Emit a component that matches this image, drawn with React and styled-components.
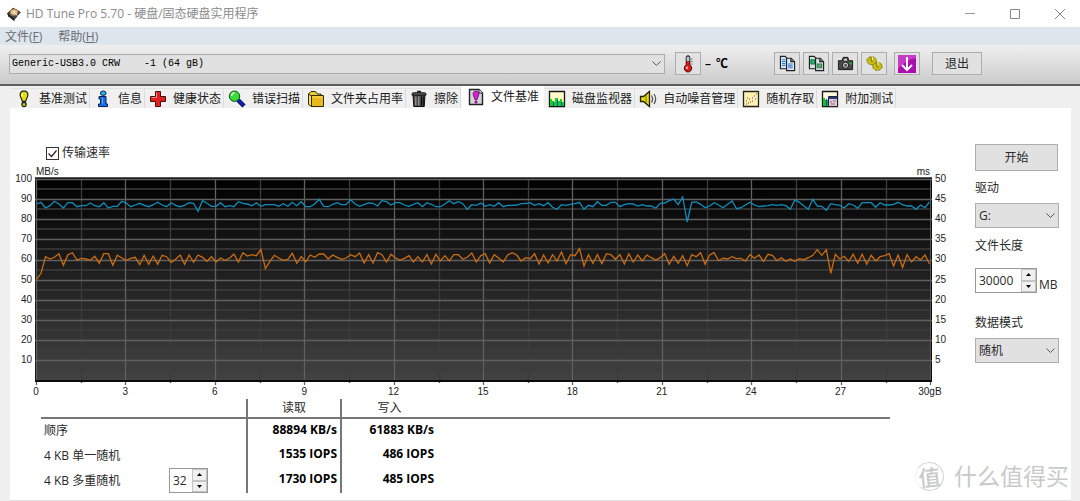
import React from 'react';
import styled, { createGlobalStyle, css } from 'styled-components';

const GlobalStyle = createGlobalStyle`
    * {
        box-sizing: border-box;
    }

    body {
        margin: 0;
        background: #f0f0f0;
        color: #2a2a2a;
        font: 12px/18px "Open Sans", "Noto Sans CJK SC", sans-serif;
    }

    button, input, select {
        font: inherit;
        color: inherit;
        margin: 0;
    }

    svg {
        display: block;
        flex: none;
    }
`;

const Window = styled.div`
    display: flex;
    flex-direction: column;
    min-height: 100vh;
    position: relative;
    overflow: hidden;
`;

const TitleBar = styled.header`
    display: flex;
    align-items: center;
    height: 27px;
    padding: 0 6px;
    background: #fff;
    color: #8c8c8c;
`;

const Title = styled.h1`
    flex: 1;
    margin: 0 0 0 4px;
    font-size: 12px;
    line-height: 18px;
    font-weight: 400;
`;

const WindowButtons = styled.div`
    display: flex;
    gap: 17px;
`;

const WindowButton = styled.button`
    display: flex;
    align-items: center;
    justify-content: center;
    width: 28px;
    height: 24px;
    padding: 0;
    border: 0;
    background: none;
`;

const MenuBar = styled.nav`
    display: flex;
    gap: 16px;
    height: 18px;
    padding: 0 5px;
    background: #dde5ed;
    line-height: 20px;
`;

const MenuItem = styled.a`
    color: #6a6e72;
    text-decoration: none;
`;

const Toolbar = styled.div`
    display: flex;
    align-items: center;
    height: 41px;
    padding: 0 98px 2px 9px;
    border-bottom: 2px solid #5e5e5e;
    background: linear-gradient(#efefef, #cbcbcb);
`;

const ToolGroup = styled.div`
    display: flex;
    gap: 3px;
    margin-right: ${props => props.$gap}px;
`;

const Button = styled.button`
    display: flex;
    align-items: center;
    justify-content: center;
    width: ${props => props.$width || 26}px;
    height: ${props => props.$height || 23}px;
    padding: 0;
    border: 1px solid #adadad;
    background: #e1e1e1;
`;

const Temperature = styled.span`
    display: flex;
    gap: 5px;
    width: 69px;
    margin-left: 4px;
    color: #000;
    font-weight: 600;
`;

const SelectBox = styled.div`
    position: relative;
    flex: ${props => props.$grow ? 1 : 'none'};
    margin-right: ${props => props.$grow ? 10 : 0}px;
`;

const Select = styled.select`
    display: block;
    width: 100%;
    height: ${props => props.$device ? 20 : 25}px;
    padding: 0 20px 0 3px;
    appearance: none;
    border: 1px solid #adadad;
    border-radius: 0;
    background: #e1e1e1;
    ${props => props.$device && css`
        padding-left: 2px;
        font: 10px "Liberation Mono", monospace;
        color: #000;
    `}
`;

const Arrow = styled.svg`
    position: absolute;
    right: 4px;
    top: 50%;
    margin-top: -3px;
    pointer-events: none;
`;

const TabList = styled.div`
    display: flex;
    align-items: flex-end;
    height: 22px;
    padding-left: 11px;
`;

const Tab = styled.button`
    display: flex;
    align-items: center;
    gap: 6px;
    height: 20px;
    padding: 0 2px 0 4px;
    border: 0;
    border-right: 1px solid #dcdcdc;
    border-top: 1px solid #e2e2e2;
    background: #f0f0f0;
    color: #1a1a1a;
    white-space: nowrap;
    ${props => props.$active && css`
        height: 22px;
        padding: 0 4px 2px 6px;
        border-color: #fff;
        background: #fff;
    `}
`;

const Panel = styled.main`
    flex: 1;
    display: grid;
    grid-template-columns: minmax(0, 1fr) 96px;
    margin: 0 9px 0 10px;
    padding-top: 36px;
    background: #fff;
    border-bottom: 1px solid #e0e0e0;
`;

const Results = styled.section`
    min-width: 0;
`;

const CheckLabel = styled.label`
    display: flex;
    align-items: center;
    gap: 3px;
    width: fit-content;
    margin-left: 36px;
    position: relative;
`;

const CheckInput = styled.input`
    appearance: none;
    width: 13px;
    height: 13px;
    border: 1px solid #333;
    background: #fff;
    & + svg {
        position: absolute;
        left: 0;
        visibility: hidden;
    }
    &:checked + svg {
        visibility: visible;
    }
`;

const ChartGrid = styled.div`
    display: grid;
    grid-template-columns: 25px minmax(0, 1fr) 43px;
    margin-top: 5px;
    font: 10px/10px "Liberation Sans", Arial, sans-serif;
    color: #222;
`;

const Units = styled.div`
    grid-column: 2;
    display: flex;
    justify-content: space-between;
    padding: 0 2px 0 1px;
`;

const Axis = styled.div`
    grid-column: ${props => props.$right ? 3 : 1};
    grid-row: 2;
    display: flex;
    flex-direction: column;
    justify-content: space-between;
    padding: 2px 3px 25px;
    text-align: ${props => props.$right ? 'left' : 'right'};
`;

const AxisLabel = styled.span`
    height: 0;
    line-height: 0;
`;

const Plot = styled.svg`
    grid-column: 2;
    grid-row: 2;
    width: 100%;
    height: 208px;
`;

const BottomAxis = styled.div`
    grid-column: 2;
    display: flex;
    justify-content: space-between;
    height: 14px;
    padding: 2px 2px 0 1px;
    & > span {
        display: flex;
        justify-content: center;
        width: 0;
    }
`;

const Table = styled.table`
    width: calc(100% - 116px);
    margin-left: 31px;
    border-collapse: collapse;
    table-layout: fixed;
`;

const HeadCell = styled.th`
    height: 19px;
    width: ${props => props.$width};
    padding: 0;
    border-bottom: 2px solid #777;
    border-right: ${props => props.$line ? '2px solid #777' : '0'};
    font-weight: 400;
    line-height: 16px;
`;

const RowLabel = styled.th`
    height: 25px;
    padding: 0 0 0 3px;
    border-right: 2px solid #777;
    text-align: left;
    font-weight: 400;
`;

const LabelLine = styled.div`
    display: flex;
    align-items: center;
    justify-content: space-between;
    padding-right: 38px;
`;

const ValueCell = styled.td`
    height: 25px;
    padding: 0 3px 3px 0;
    border-right: ${props => props.$line ? '2px solid #777' : '0'};
    color: #000;
    text-align: right;
    font-weight: 700;
    white-space: nowrap;
`;

const Spinner = styled.span`
    display: inline-flex;
    width: ${props => props.$width}px;
    height: 25px;
    border: 1px solid #999;
    background: #fff;
`;

const SpinInput = styled.input`
    flex: 1;
    min-width: 0;
    padding: 0 0 0 3px;
    border: 0;
    background: none;
    appearance: textfield;
    &::-webkit-inner-spin-button {
        appearance: none;
    }
`;

const SpinButtons = styled.span`
    display: grid;
    grid-template-rows: 1fr 1fr;
    width: 15px;
`;

const SpinButton = styled.button`
    display: flex;
    align-items: center;
    justify-content: center;
    padding: 0;
    border: 1px solid #c4c4c4;
    background: #f0f0f0;
`;

const Side = styled.aside`
    display: flex;
    flex-direction: column;
    padding-right: 12px;
`;

const Field = styled.div`
    display: flex;
    flex-direction: column;
    gap: ${props => props.$gap || 6}px;
    margin-top: ${props => props.$top}px;
`;

const SizeLine = styled.div`
    display: flex;
    align-items: flex-end;
    gap: 2px;
    line-height: 16px;
`;

const Watermark = styled.div`
    position: absolute;
    right: 11px;
    bottom: 8px;
    display: flex;
    align-items: center;
    gap: 10px;
    color: #c9c9c9;
    font-size: 23px;
    line-height: 34px;
    font-weight: 400;
`;

const Seal = styled.span`
    display: flex;
    align-items: center;
    justify-content: center;
    width: 29px;
    height: 29px;
    border: 1px solid #d2d2d2;
    border-left-color: #f2f2f2;
    border-radius: 50%;
    font-size: 22px;
    font-weight: 500;
    transform: rotate(-6deg);
`;

// one sample per 150 MB, kept in thirds of a plot unit above the offset
const READ = [
    192, 187, 204, 197, 184, 192, 204, 188, 188, 200, 197, 197, 189, 197, 200, 188, 204, 199, 199, 184,
    189, 200, 195, 190, 196, 200, 194, 187, 195, 200, 188, 196, 200, 196, 188, 190, 214, 182, 190, 199,
    199, 188, 200, 197, 200, 185, 190, 192, 197, 188, 199, 194, 194, 194, 199, 191, 199, 187, 197, 185,
    200, 200, 192, 178, 199, 200, 193, 188, 194, 194, 179, 192, 199, 194, 189, 190, 198, 182, 185, 195,
    188, 188, 195, 199, 193, 188, 200, 188, 193, 200, 200, 192, 182, 191, 185, 191, 208, 194, 196, 189,
    199, 194, 199, 188, 200, 196, 196, 195, 191, 191, 188, 196, 191, 197, 188, 202, 208, 194, 196, 193,
    191, 187, 208, 196, 200, 185, 196, 196, 187, 187, 200, 194, 191, 192, 198, 194, 198, 198, 205, 190,
    189, 182, 177, 194, 171, 246, 187, 186, 193, 203, 198, 188, 195, 203, 193, 183, 206, 203, 195, 187,
    195, 200, 198, 197, 194, 196, 194, 197, 208, 180, 187, 198, 208, 178, 198, 199, 211, 191, 194, 196,
    204, 191, 195, 205, 188, 188, 188, 202, 188, 195, 195, 193, 187, 194, 198, 198, 208, 195, 203, 186,
];

const WRITE = [
    418, 400, 350, 357, 352, 341, 376, 344, 338, 360, 355, 357, 361, 349, 370, 341, 341, 376, 346, 354,
    361, 355, 352, 374, 346, 373, 348, 373, 346, 350, 367, 358, 345, 373, 345, 367, 345, 352, 364, 350,
    366, 354, 361, 355, 342, 366, 338, 348, 344, 347, 328, 386, 365, 346, 354, 361, 358, 340, 370, 350,
    366, 345, 352, 342, 342, 357, 345, 352, 358, 354, 344, 350, 339, 369, 344, 369, 338, 344, 366, 343,
    354, 360, 355, 347, 366, 350, 366, 344, 372, 343, 363, 347, 363, 344, 344, 358, 352, 339, 366, 347,
    341, 369, 344, 354, 366, 345, 338, 345, 363, 353, 356, 341, 372, 345, 369, 344, 363, 336, 371, 344,
    347, 326, 378, 344, 370, 344, 371, 341, 344, 358, 344, 372, 341, 366, 345, 363, 345, 353, 360, 353,
    341, 373, 349, 370, 347, 377, 344, 350, 338, 373, 345, 338, 362, 355, 357, 350, 356, 355, 363, 344,
    355, 345, 364, 343, 346, 362, 353, 364, 357, 364, 356, 359, 353, 346, 329, 346, 329, 400, 343, 357,
    349, 364, 343, 370, 343, 373, 346, 363, 350, 347, 341, 378, 345, 382, 344, 366, 350, 360, 345, 372,
];

const tracePoints = samples => samples
    .map((s, i) => `${(1.5 + i * 893 / (samples.length - 1)).toFixed(1)},${(s / 3 - 37).toFixed(1)}`)
    .join(' ');

const STEPS = [0, 1, 2, 3, 4, 5, 6, 7, 8, 9];

const ICONS = {
    bench: (
        <g stroke="#222" strokeWidth="1.2">
            <path d="M9 1.2c-3-.2-4.200 1.800-3.800 4.300.3 2 1.600 3.500 2.100 5.800h3.400c.5-2.300 1.800-3.800 2.100-5.800.4-2.500-.800-4.500-3.800-4.300Z" fill="#e2de08" />
            <path d="M8 3.200c-1 .3-1.300 1.800-.8 3.300" stroke="#ffffb0" fill="none" />
            <circle cx="9" cy="14.500" r="2.200" fill="#c8c010" />
        </g>
    ),
    info: (
        <g stroke="#0a1c50" strokeWidth="1">
            <path d="M5 6.500h7v7.500h1.500v2.500H4.500V14H6.500V9H5Z" fill="#1472e8" />
            <ellipse cx="9.200" cy="3.200" rx="2.800" ry="2.200" fill="#22b6ee" />
            <path d="M8.500 8v6" stroke="#50b0ff" />
        </g>
    ),
    health: (
        <g>
            <path d="M6.500 1.500h5v5h5v5h-5v5h-5v-5h-5v-5h5Z" fill="#de2020" stroke="#471010" />
            <path d="M7.500 2.500v5h-5" fill="none" stroke="#ff8b80" />
        </g>
    ),
    search: (
        <g>
            <path d="m10 10 6 6" stroke="#10103a" strokeWidth="4.500" />
            <path d="m10 10 5.500 5.500" stroke="#1020c8" strokeWidth="2.500" />
            <circle cx="6.500" cy="6.200" r="5.200" fill="#38dc38" stroke="#134a18" />
            <path d="M3.500 6c.2-2 1.200-3 3-3.200" fill="none" stroke="#d0ffc8" strokeWidth="1.500" />
        </g>
    ),
    folder: (
        <g stroke="#332b00">
            <path d="M1.500 14V4L4 1.500h4.500L10.500 4H14v2" fill="#e9ce30" />
            <path d="M1.500 4v10.500l3 2V6Z" fill="#f6e25a" />
            <path d="M4.500 5.500h12v11h-12Z" fill="#e8b81c" />
            <path d="M5.500 7h10" stroke="#ffe774" />
        </g>
    ),
    trash: (
        <g>
            <path d="M3 4.500h12l-.800 12H3.800Z" fill="#444" stroke="#0c0c0c" />
            <path d="M2 3.500c0-1.200 14-1.200 14 0v1.700H2Z" fill="#585858" stroke="#161616" />
            <path d="M7 1.500h4" stroke="#222" strokeWidth="1.500" />
            <path d="M5.800 6.500v9M8.800 6.500v9" stroke="#999" strokeWidth="1.300" />
            <path d="M11.500 6.500v9M13.300 6.500v9" stroke="#111" />
        </g>
    ),
    file: (
        <g>
            <path d="M2.500 1.500H12L15.500 5v11.500h-13Z" fill="#d4d4d8" stroke="#222" strokeWidth="1.400" />
            <path d="M12 1.500V5h3.500" fill="#fff" stroke="#222" />
            <path d="M9 3.200c-2.800 0-3.200 2-2.700 3.700L8 11.800h2l1.700-4.900C12.200 5.200 11.800 3.200 9 3.200Z" fill="#d81cd8" stroke="#50104f" strokeWidth=".8" />
            <circle cx="9" cy="14" r="1.500" fill="#9c0c9c" />
        </g>
    ),
    monitor: (
        <g>
            <path d="M1.500 1.500h15v15h-15Z" fill="#fffbc8" stroke="#161616" strokeWidth="1.300" />
            <path d="M2 9h2v2h2v1h1V8h3v3h2V9h2v3h2v4H2Z" fill="#10d718" />
            <path d="M5.500 12v4M9.500 10v6M13.500 12v4" stroke="#1648e0" strokeWidth="1.200" />
        </g>
    ),
    sound: (
        <g>
            <path d="M1.500 6.500h3l6-5v15l-6-5h-3Z" fill="#e6dc10" stroke="#242000" strokeWidth="1.300" />
            <path d="M7 5v8" stroke="#756e00" />
            <path d="M12.500 5.500c1.300 2 1.300 5 0 7M15 4c2 3 2 7 0 10" fill="none" stroke="#555" strokeWidth="1.300" />
        </g>
    ),
    random: (
        <g>
            <path d="M1.500 1.500h15v15h-15Z" fill="#fff3b4" stroke="#26241a" strokeWidth="1.300" />
            <path d="M4 11h1M6 13h1M7 9h1M10 11h1M12 6h1M14 4h1" stroke="#e07014" strokeWidth="1.500" />
            <path d="M4 14h1M8 12h1M10 8h1M13 9h1M5 8h1" stroke="#8a7ac0" strokeWidth="1.300" />
        </g>
    ),
    extra: (
        <g>
            <path d="M1.500 1.500h15v15h-15Z" fill="#fffbe0" stroke="#161616" strokeWidth="1.300" />
            <path d="M2 8h2v2h3v6H2Z" fill="#10c818" />
            <path d="M5.500 9v7" stroke="#1648e0" strokeWidth="1.300" />
            <path d="M7.500 6.500h9v10h-9Z" fill="#d7cbe2" stroke="#222" />
            <path d="M8 8h8" stroke="#223c90" strokeWidth="2" />
            <path d="M9 12h2M12 11h3M10 14h4" stroke="#c05858" />
        </g>
    ),
    thermometer: (
        <g>
            <path d="M7.200 2c0-1.600 3.600-1.600 3.600 0v8c3.300 1.800 2 7-1.800 7s-5.100-5.200-1.800-7Z" fill="#e01818" stroke="#3c1010" />
            <path d="M7.700 1.800h2.600V6H7.700Z" fill="#7fe0e8" />
            <path d="M11.500 4h2M11.500 6.500h2M11.500 9h2" stroke="#777" />
            <circle cx="8" cy="12.800" r="1.200" fill="#ffb0a0" />
        </g>
    ),
    copy: (
        <g stroke="#222" strokeWidth="1.200">
            <path d="M1.500 1.500h5L9 4v10.500H1.500Z" fill="#d6e6f4" />
            <path d="M3 5h4M3 7h4M3 9h4M3 11h4" stroke="#3b88cc" />
            <path d="M8 3.500h5L16.500 7v9.500H8Z" fill="#dce9f5" />
            <path d="M12.500 3.500V7h4" fill="#888" />
            <path d="M9.500 9.500h5M9.500 11.500h5M9.500 13.500h5" stroke="#3478d8" />
        </g>
    ),
    copyImage: (
        <g stroke="#222" strokeWidth="1.200">
            <path d="M1.500 1.500h5L9 4v10.500H1.500Z" fill="#d8e0d2" />
            <path d="M3 5h4v4.500H3Z" fill="#22b848" stroke="#16806a" />
            <path d="M8 3.500h5L16.500 7v9.500H8Z" fill="#d8e0d2" />
            <path d="M12.500 3.500V7h4" fill="#888" />
            <path d="M9.800 9.500h4.700v4H9.800Z" fill="#68b800" stroke="#2078a0" />
        </g>
    ),
    camera: (
        <g>
            <path d="M1.500 6h4l1-3.500h5l1 3.500h4v9.500h-15Z" fill="#484848" stroke="#191919" />
            <path d="M7.500 4h3v2h-3Z" fill="#e0e0e0" />
            <circle cx="9" cy="10.800" r="3.300" fill="#ccc" stroke="#111" />
            <circle cx="9" cy="10.800" r="1.600" fill="#555" />
            <path d="M13.500 9h2" stroke="#18cc30" strokeWidth="2" />
        </g>
    ),
    gears: (
        <g fill="#c9bd12" stroke="#6e6708" strokeWidth="1">
            <ellipse cx="6" cy="6" rx="5" ry="4.200" strokeDasharray="2.500 1" />
            <ellipse cx="12" cy="12" rx="5" ry="4.200" strokeDasharray="2.500 1" />
            <ellipse cx="6" cy="6" rx="4" ry="3.200" stroke="none" />
            <ellipse cx="12" cy="12" rx="4" ry="3.200" stroke="none" />
            <path d="M6.500 1.500V6M12.500 7.500V12" stroke="#fff5a0" strokeWidth="1.500" />
            <path d="M5.500 2v4.500h2M11.500 8v4.500h2" fill="none" />
        </g>
    ),
    download: (
        <g>
            <path d="M0 0h18v18H0Z" fill="#ac0cb0" />
            <path d="M0 0h18v3C12 4 5 8 0 14Z" fill="#c63cc8" />
            <path d="M9 2v12M4 10l5 5 5-5" fill="none" stroke="#fff" strokeWidth="2" />
        </g>
    ),
    disk: (
        <g>
            <path d="M1.500 8.500 8 2.500l8 4.500-6.500 8Z" fill="#444" stroke="#1e1e1e" />
            <path d="m1.500 8.500 8 6.500v2.500l-7-6Z" fill="#1b1b1b" />
            <ellipse cx="9" cy="7" rx="4.500" ry="3.700" fill="#e4ba85" stroke="#926c3c" />
            <circle cx="9" cy="7" r="1.200" fill="#fff" />
            <path d="m10 8 3 3" stroke="#eee" />
        </g>
    ),
};

const Icon = ({ name, size = 18 }) => (
    <svg width={size} height={size} viewBox="0 0 18 18" aria-hidden="true">{ICONS[name]}</svg>
);

const TABS = [
    ['bench', '基准测试'],
    ['info', '信息'],
    ['health', '健康状态'],
    ['search', '错误扫描'],
    ['folder', '文件夹占用率'],
    ['trash', '擦除'],
    ['file', '文件基准'],
    ['monitor', '磁盘监视器'],
    ['sound', '自动噪音管理'],
    ['random', '随机存取'],
    ['extra', '附加测试'],
];

const TOOLS = [
    ['copy', '复制文本'],
    ['copyImage', '复制图像'],
    ['camera', '截图'],
    ['gears', '设置'],
];

const DropDown = ({ id, value, label, device }) => (
    <SelectBox $grow={device}>
        <Select id={id} aria-label={label} $device={device} defaultValue={value}>
            <option value={value}>{value}</option>
        </Select>
        <Arrow width="9" height="6" viewBox="0 0 9 6">
            <path d="m.5.5 4 4 4-4" fill="none" stroke="#555" />
        </Arrow>
    </SelectBox>
);

class NumberBox extends React.Component {
    constructor(props) {
        super(props)
        this.state = { value: props.value }
    }

    step(amount) {
        this.setState({ value: Number(this.state.value) + amount });
    }

    render() {
        const { id, width } = this.props;
        return (
            <Spinner $width={width}>
                <SpinInput
                    id={id}
                    type="number"
                    value={this.state.value}
                    onChange={e => this.setState({ value: e.target.value })} />
                <SpinButtons>
                    <SpinButton aria-label="增加" onClick={() => this.step(1)}>
                        <svg width="5" height="3" viewBox="0 0 5 3"><path d="M0 3 2.500 0 5 3Z" /></svg>
                    </SpinButton>
                    <SpinButton aria-label="减少" onClick={() => this.step(-1)}>
                        <svg width="5" height="3" viewBox="0 0 5 3"><path d="m0 0 2.500 3L5 0Z" /></svg>
                    </SpinButton>
                </SpinButtons>
            </Spinner>
        )
    }
}

const Chart = () => (
    <ChartGrid>
        <Units><span>MB/s</span><span>ms</span></Units>
        <Axis>
            {STEPS.map(n => <AxisLabel key={n}>{100 - n * 10}</AxisLabel>)}
        </Axis>
        <Plot viewBox="0 0 897 208" preserveAspectRatio="none">
            <defs>
                <linearGradient id="plot-bg" x1="0" y1="0" x2="0" y2="1">
                    <stop offset="0" stopColor="#000" />
                    <stop offset="1" stopColor="#424242" />
                </linearGradient>
            </defs>
            <rect width="897" height="205" fill="#0a0a0a" />
            <rect x="1" y="2" width="894" height="201" fill="url(#plot-bg)" />
            <path d="M0 .5h897" stroke="#555" />
            {STEPS.map(n => (
                <path
                    key={n}
                    d={`M1 ${Math.round(n * 20.13 + 12)}h894M${Math.round(n * 89.4 + 46)}.5 2v204`}
                    stroke="#3c3c3c"
                    strokeWidth="1.300" />
            ))}
            {STEPS.map(n => (
                <path
                    key={n}
                    d={`M0 ${Math.round(n * 20.13 + 2)}.5h897M${Math.round(n * 89.4 + 1)}.5 2v206`}
                    stroke="#606060"
                    strokeWidth="1.300" />
            ))}
            <path d="M895.500 2v206" stroke="#555" />
            <path d="M0 204h897" stroke="#0a0a0a" strokeWidth="2" />
            <polyline points={tracePoints(READ)} fill="none" stroke="#0c8fbd" strokeWidth="1.300" />
            <polyline points={tracePoints(WRITE)} fill="none" stroke="#cc6c10" strokeWidth="1.300" />
        </Plot>
        <Axis $right>
            {STEPS.map(n => <AxisLabel key={n}>{50 - n * 5}</AxisLabel>)}
        </Axis>
        <BottomAxis>
            {STEPS.map(n => <span key={n}>{n * 3}</span>)}
            <span>30gB</span>
        </BottomAxis>
    </ChartGrid>
);

const ResultTable = () => (
    <Table>
        <thead>
            <tr>
                <HeadCell $width="206px" $line />
                <HeadCell $width="94px" $line>读取</HeadCell>
                <HeadCell $width="96px">写入</HeadCell>
                <HeadCell />
            </tr>
        </thead>
        <tbody>
            <tr>
                <RowLabel>顺序</RowLabel>
                <ValueCell $line>88894 KB/s</ValueCell>
                <ValueCell>61883 KB/s</ValueCell>
            </tr>
            <tr>
                <RowLabel>4 KB 单一随机</RowLabel>
                <ValueCell $line>1535 IOPS</ValueCell>
                <ValueCell>486 IOPS</ValueCell>
            </tr>
            <tr>
                <RowLabel>
                    <LabelLine>
                        <label htmlFor="queue">4 KB 多重随机</label>
                        <NumberBox id="queue" width={39} value={32} />
                    </LabelLine>
                </RowLabel>
                <ValueCell $line>1730 IOPS</ValueCell>
                <ValueCell>485 IOPS</ValueCell>
            </tr>
        </tbody>
    </Table>
);

const App = () => (
    <Window>
        <GlobalStyle />
        <TitleBar>
            <Icon name="disk" size={16} />
            <Title>HD Tune Pro 5.70 - 硬盘/固态硬盘实用程序</Title>
            <WindowButtons>
                <WindowButton aria-label="最小化">
                    <svg width="10" height="10" viewBox="0 0 10 10"><path d="M0 4.500h10" stroke="#999" /></svg>
                </WindowButton>
                <WindowButton aria-label="最大化">
                    <svg width="10" height="10" viewBox="0 0 10 10"><path d="M.5.500h9v9h-9Z" fill="none" stroke="#888" /></svg>
                </WindowButton>
                <WindowButton aria-label="关闭">
                    <svg width="10" height="10" viewBox="0 0 10 10"><path d="m0 0 10 10M10 0 0 10" stroke="#888" /></svg>
                </WindowButton>
            </WindowButtons>
        </TitleBar>
        <MenuBar>
            <MenuItem href="#file">文件(<u>F</u>)</MenuItem>
            <MenuItem href="#help">帮助(<u>H</u>)</MenuItem>
        </MenuBar>
        <Toolbar>
            <DropDown device label="驱动器" value={'Generic-USB3.0 CRW\u00a0\u00a0\u00a0\u00a0-1 (64 gB)'} />
            <Button aria-label="温度"><Icon name="thermometer" /></Button>
            <Temperature><span>–</span><span>℃</span></Temperature>
            <ToolGroup $gap={7}>
                {TOOLS.map(([name, label]) => (
                    <Button key={name} aria-label={label}><Icon name={name} size={17} /></Button>
                ))}
            </ToolGroup>
            <ToolGroup $gap={12}>
                <Button aria-label="保存"><Icon name="download" /></Button>
            </ToolGroup>
            <Button $width={50}>退出</Button>
        </Toolbar>
        <TabList role="tablist">
            {TABS.map(([name, label]) => (
                <Tab key={name} role="tab" aria-selected={name === 'file'} $active={name === 'file'}>
                    <Icon name={name} />
                    {label}
                </Tab>
            ))}
        </TabList>
        <Panel>
            <Results>
                <CheckLabel>
                    <CheckInput type="checkbox" defaultChecked />
                    <svg width="13" height="13" viewBox="0 0 13 13">
                        <path d="m2.500 6.500 3 3 5-6" fill="none" stroke="#222" strokeWidth="1.200" />
                    </svg>
                    传输速率
                </CheckLabel>
                <Chart />
                <ResultTable />
            </Results>
            <Side>
                <Button $width={83} $height={27}>开始</Button>
                <Field $top={8}>
                    <label htmlFor="drive">驱动</label>
                    <DropDown id="drive" value="G:" />
                </Field>
                <Field $top={9} $gap={13}>
                    <label htmlFor="length">文件长度</label>
                    <SizeLine>
                        <NumberBox id="length" width={62} value={30000} />
                        <span>MB</span>
                    </SizeLine>
                </Field>
                <Field $top={21}>
                    <label htmlFor="mode">数据模式</label>
                    <DropDown id="mode" value="随机" />
                </Field>
            </Side>
        </Panel>
        <Watermark>
            <Seal>值</Seal>
            什么值得买
        </Watermark>
    </Window>
);

export default App;
